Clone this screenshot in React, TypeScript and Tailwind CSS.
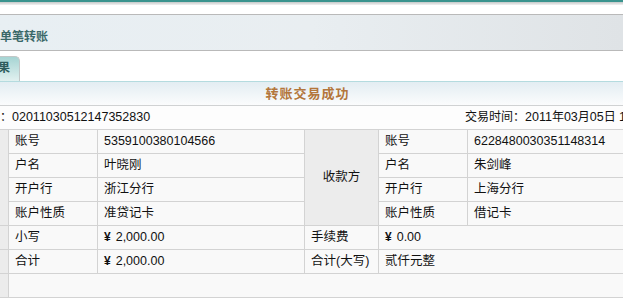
import React from 'react';

const FONT = "font-['Liberation_Sans','Noto_Sans_CJK_SC',sans-serif]";

type CellProps = {
  children?: React.ReactNode;
  className?: string;
};

function Cell({ children, className = '' }: CellProps) {
  return (
    <div className={`flex items-center pl-[6px] bg-[#f9f9f9] whitespace-nowrap ${className}`}>
      {children}
    </div>
  );
}

function Money({ value }: { value: string }) {
  return (
    <span>
      <span className="font-bold text-[12px] mr-[5px]">¥</span>
      {value}
    </span>
  );
}

export default function App() {
  return (
    <div className={`w-[623px] h-[307px] overflow-hidden bg-white text-[12.5px] text-black ${FONT}`}>
      {/* top bar */}
      <div className="h-[2px] bg-[#3a948e]" />
      <div className="h-[3px] bg-gradient-to-b from-[#c4c8c8] to-[#f2f2f2]" />
      <div className="h-[9px]" />

      {/* page title */}
      <div className="h-[37px] border-y border-[#b9b9b9] bg-gradient-to-r from-[#e8eff3] via-[#e9eef1] to-[#dfe3e6]">
        <div className="pt-[15px] leading-[14px] text-[12px] font-bold text-[#3a6868] whitespace-nowrap">
          单笔转账
        </div>
      </div>

      {/* tabs */}
      <div className="h-[31px] flex items-end border-b border-[#b4dbdf]">
        <div className="-ml-[40px] w-[60px] h-[25px] rounded-tr-[5px] border-t border-r border-[#c2c7c7] bg-gradient-to-b from-[#a5d4d3] to-[#e2f1f0] text-right pr-[9px] pt-[4px] leading-[14px] text-[12px] font-bold text-[#2f5c5c] whitespace-nowrap">
          结果
        </div>
      </div>

      {/* result banner */}
      <div className="h-[24px] border-b border-[#d0d2d3] bg-gradient-to-b from-[#e3edf2] to-[#fbfcfd] flex items-center justify-center pr-[8px]">
        <span className="text-[13px] font-bold tracking-[1px] text-[#b3763b]">转账交易成功</span>
      </div>

      {/* serial & time */}
      <div className="h-[23px] flex items-center whitespace-nowrap bg-[#fdfdfd] text-[#111]">
        <span className="-ml-[60px] w-[525px] shrink-0">
          <span className="text-[12px]">交易流水号：</span>02011030512147352830
        </span>
        <span className="shrink-0 text-[12px]">
          交易时间：<span className="text-[12.5px]">2011</span>年<span className="text-[12.5px]">03</span>月<span className="text-[12.5px]">05</span>日 <span className="text-[12.5px]">14:35:21</span>
        </span>
      </div>

      {/* detail table */}
      <div className="-ml-[66px] w-[900px] grid grid-cols-[74px_88px_206px_73px_88px_366px] grid-rows-[repeat(7,23px)] gap-px bg-[#d3d3d3] border-y border-[#d3d3d3] text-[#111]">
        <div className="row-span-4 bg-[#ececec] flex items-center justify-center">付款方</div>
        <Cell>账号</Cell>
        <Cell>5359100380104566</Cell>
        <div className="row-span-4 bg-[#ececec] flex items-center justify-center">收款方</div>
        <Cell>账号</Cell>
        <Cell>6228480030351148314</Cell>

        <Cell>户名</Cell>
        <Cell>叶晓刚</Cell>
        <Cell>户名</Cell>
        <Cell>朱剑峰</Cell>

        <Cell>开户行</Cell>
        <Cell>浙江分行</Cell>
        <Cell>开户行</Cell>
        <Cell>上海分行</Cell>

        <Cell>账户性质</Cell>
        <Cell>准贷记卡</Cell>
        <Cell>账户性质</Cell>
        <Cell>借记卡</Cell>

        <div className="bg-[#ececec]" />
        <Cell>小写</Cell>
        <Cell><Money value="2,000.00" /></Cell>
        <Cell>手续费</Cell>
        <Cell className="col-span-2"><Money value="0.00" /></Cell>

        <div className="bg-[#ececec]" />
        <Cell>合计</Cell>
        <Cell><Money value="2,000.00" /></Cell>
        <Cell>合计(大写)</Cell>
        <Cell className="col-span-2">贰仟元整</Cell>

        <div className="bg-[#ececec]" />
        <Cell className="col-span-5" />
      </div>
    </div>
  );
}
